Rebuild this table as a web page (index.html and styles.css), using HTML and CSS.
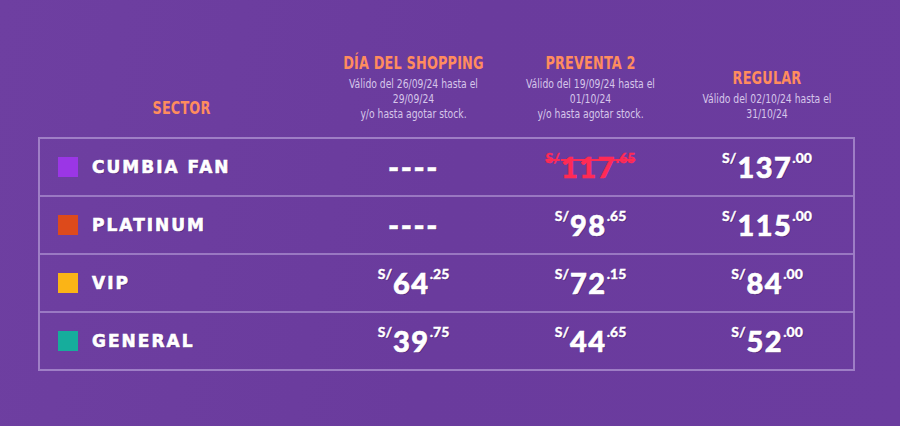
FILE: index.html
```html
<!DOCTYPE html>
<html lang="es">
<head>
<meta charset="utf-8">
<link rel="stylesheet" href="styles.css">
</head>
<body>
<div class="page">
  <div class="prices">
    <div class="head">
      <div class="hcell sector-h"><div class="htitle">SECTOR</div></div>
      <div class="hcell">
        <div class="htitle">DÍA DEL SHOPPING</div>
        <div class="hsub">Válido del 26/09/24 hasta el<br>29/09/24<br>y/o hasta agotar stock.</div>
      </div>
      <div class="hcell">
        <div class="htitle">PREVENTA 2</div>
        <div class="hsub">Válido del 19/09/24 hasta el<br>01/10/24<br>y/o hasta agotar stock.</div>
      </div>
      <div class="hcell">
        <div class="htitle">REGULAR</div>
        <div class="hsub">Válido del 02/10/24 hasta el<br>31/10/24</div>
      </div>
    </div>
    <div class="table">
      <div class="row">
        <div class="sector"><span class="sw sw-fan"></span>CUMBIA FAN</div>
        <div class="cell"><span class="dash">----</span></div>
        <div class="cell"><span class="price old"><sup class="cur">S/</sup><span class="num">117</span><sup class="dec">.65</sup></span></div>
        <div class="cell"><span class="price"><sup class="cur">S/</sup><span class="num">137</span><sup class="dec">.00</sup></span></div>
      </div>
      <div class="row">
        <div class="sector"><span class="sw sw-plat"></span>PLATINUM</div>
        <div class="cell"><span class="dash">----</span></div>
        <div class="cell"><span class="price"><sup class="cur">S/</sup><span class="num">98</span><sup class="dec">.65</sup></span></div>
        <div class="cell"><span class="price"><sup class="cur">S/</sup><span class="num">115</span><sup class="dec">.00</sup></span></div>
      </div>
      <div class="row">
        <div class="sector"><span class="sw sw-vip"></span>VIP</div>
        <div class="cell"><span class="price"><sup class="cur">S/</sup><span class="num">64</span><sup class="dec">.25</sup></span></div>
        <div class="cell"><span class="price"><sup class="cur">S/</sup><span class="num">72</span><sup class="dec">.15</sup></span></div>
        <div class="cell"><span class="price"><sup class="cur">S/</sup><span class="num">84</span><sup class="dec">.00</sup></span></div>
      </div>
      <div class="row">
        <div class="sector"><span class="sw sw-gen"></span>GENERAL</div>
        <div class="cell"><span class="price"><sup class="cur">S/</sup><span class="num">39</span><sup class="dec">.75</sup></span></div>
        <div class="cell"><span class="price"><sup class="cur">S/</sup><span class="num">44</span><sup class="dec">.65</sup></span></div>
        <div class="cell"><span class="price"><sup class="cur">S/</sup><span class="num">52</span><sup class="dec">.00</sup></span></div>
      </div>
    </div>
  </div>
</div>
</body>
</html>
```

FILE: styles.css
```css
html, body {
  margin: 0;
  padding: 0;
}
body {
  width: 900px;
  height: 426px;
  overflow: hidden;
  background: linear-gradient(100deg, #6e3fa1 0%, #6a3b9d 50%, #6b3c9f 100%);
  font-family: "Lato", "DejaVu Sans", sans-serif;
}
.page {
  padding: 50px 0 0 38px;
}
.prices {
  width: 817px;
}
.head {
  display: grid;
  grid-template-columns: 287px 177px 177px 176px;
  align-items: end;
  height: 87px;
  box-sizing: border-box;
  padding-bottom: 16px;
}
.hcell {
  text-align: center;
}
.htitle {
  font-family: "DejaVu Sans Condensed", "DejaVu Sans", sans-serif;
  font-stretch: condensed;
  font-weight: bold;
  font-size: 17px;
  line-height: 22px;
  margin-bottom: 2px;
  color: #ff8c5e;
  transform: scaleX(0.84);
  letter-spacing: 0.2px;
}
.hsub {
  font-family: "DejaVu Sans Condensed", "DejaVu Sans", sans-serif;
  font-stretch: condensed;
  font-size: 12.5px;
  line-height: 15px;
  color: #d6c6ea;
  transform: scaleX(0.82);
  white-space: nowrap;
}
.table {
  border: 2px solid rgba(200, 180, 230, 0.55);
}
.row {
  display: grid;
  grid-template-columns: 285px 177px 177px 176px;
  height: 56px;
  align-items: center;
  border-top: 2px solid rgba(200, 180, 230, 0.5);
}
.row:first-child {
  border-top: none;
}
.sector {
  display: flex;
  align-items: center;
  padding-left: 18px;
  font-family: "DejaVu Sans", sans-serif;
  font-weight: bold;
  font-size: 17px;
  letter-spacing: 2px;
  color: #ffffff;
  -webkit-text-stroke: 0.6px #ffffff;
  text-shadow: 1px 1px 0 rgba(60, 20, 90, 0.5);
}
.sw {
  display: inline-block;
  width: 20px;
  height: 20px;
  margin-right: 14px;
}
.sw-fan { background: #9b36e6; }
.sw-plat { background: #dd4a1b; }
.sw-vip { background: #fbb416; }
.sw-gen { background: #16ad9c; }
.cell {
  text-align: center;
  color: #ffffff;
}
.dash {
  font-family: "Lato", sans-serif;
  font-weight: 900;
  font-size: 30px;
  letter-spacing: 1.5px;
  -webkit-text-stroke: 0.5px #ffffff;
  text-shadow: 1px 1px 0 rgba(60, 20, 90, 0.5);
}
.price {
  font-family: "Lato", sans-serif;
  font-weight: 900;
  color: #ffffff;
  -webkit-text-stroke: 0.6px #ffffff;
  text-shadow: 1px 1px 0 rgba(60, 20, 90, 0.5);
  white-space: nowrap;
}
.price sup {
  vertical-align: top;
  position: relative;
  top: -2px;
  font-size: 14px;
  line-height: 1;
  -webkit-text-stroke: 0.3px currentColor;
}
.price .num {
  font-size: 29px;
  line-height: 28px;
  letter-spacing: 1.5px;
}
.price .cur {
  margin-right: 1px;
}
.price.old {
  color: #ff2a55;
  -webkit-text-stroke: 0.6px #ff2a55;
  text-decoration: line-through;
  text-decoration-thickness: 2px;
  text-shadow: none;
}
```
